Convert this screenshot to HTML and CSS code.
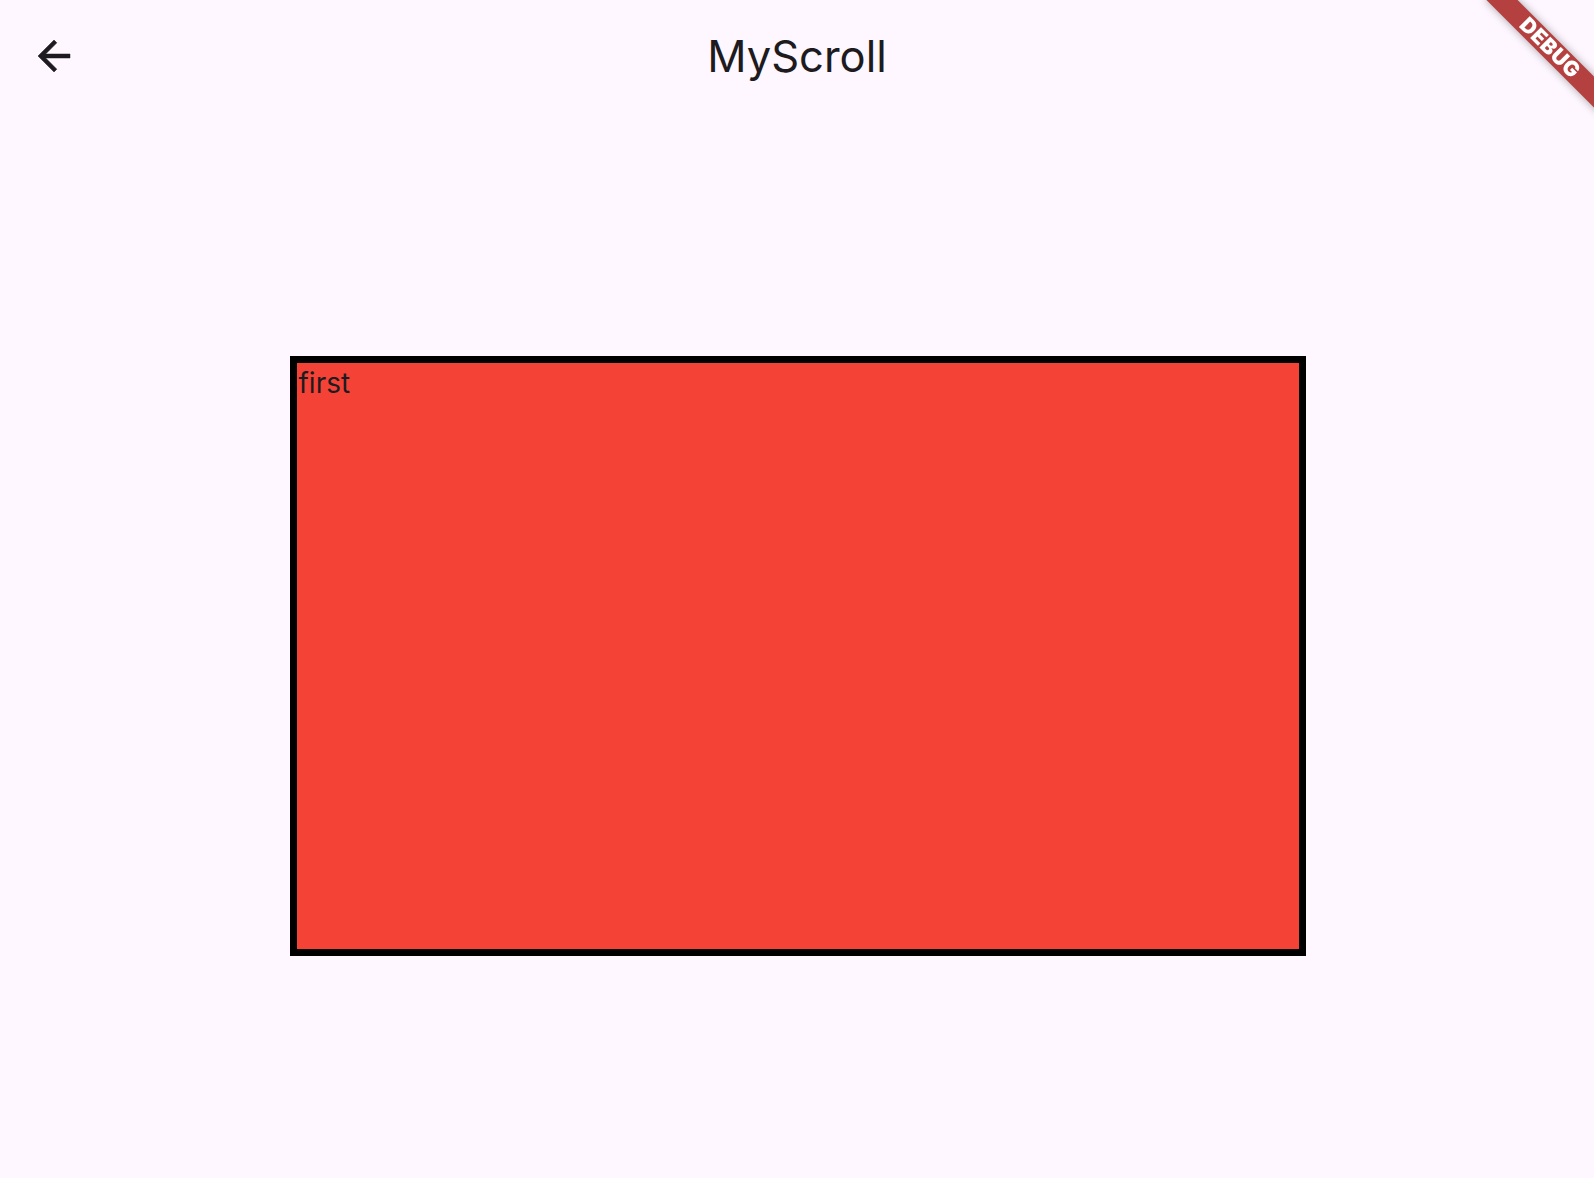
FILE: index.html
```html
<!DOCTYPE html>
<html>
<head>
<meta charset="utf-8">
<link rel="stylesheet" href="styles.css">
</head>
<body>
  <header class="appbar">
    <div class="lead">
      <svg class="back" viewBox="0 0 24 24" width="48" height="48"><path d="M20 11H7.83l5.59-5.59L12 4l-8 8 8 8 1.41-1.41L7.83 13H20v-2z" fill="#1d1b20" stroke="#1d1b20" stroke-width="0.25"/></svg>
    </div>
    <h1 class="title">MyScroll</h1>
    <div class="trail"></div>
  </header>
  <main class="content">
    <div class="box"><span class="label">first</span></div>
  </main>
  <div class="banner-clip"><div class="banner">DEBUG</div></div>
</body>
</html>
```
FILE: styles.css
```css
html, body {
  margin: 0;
  padding: 0;
  background: #fef7ff;
  width: 1594px;
  height: 1178px;
  overflow: hidden;
  font-family: Inter, Roboto, sans-serif;
  color: #1d1b20;
}
.appbar {
  height: 112px;
  display: grid;
  grid-template-columns: 1fr auto 1fr;
  align-items: center;
}
.lead {
  padding-left: 30px;
  display: flex;
  align-items: center;
}
.back { display: block; }
.title {
  margin: 0;
  font-size: 43.5px;
  font-weight: 400;
  line-height: 52px;
  letter-spacing: 0;
}
.content {
  display: flex;
  justify-content: center;
  padding-top: 244px;
  padding-left: 1px;
}
.box {
  box-sizing: border-box;
  width: 1016px;
  height: 600px;
  border: 7px solid #000;
  background: #f44336;
  padding: 0 0 0 2px;
}
.label {
  display: block;
  font-size: 28px;
  line-height: 40px;
  color: #1d1b20;
}
.banner-clip {
  position: fixed;
  top: 0;
  right: 0;
  width: 160px;
  height: 160px;
  overflow: hidden;
}
.banner {
  position: absolute;
  left: 36px;
  top: 37px;
  width: 160px;
  height: 22px;
  transform: rotate(45deg);
  background: #b4403f;
  box-shadow: 0 0 8px rgba(0,0,0,0.35);
  color: #fff;
  font-family: Inter, Roboto, sans-serif;
  font-weight: 900;
  font-size: 21px;
  line-height: 22px;
  text-align: center;
  letter-spacing: 0.5px;
}
```
